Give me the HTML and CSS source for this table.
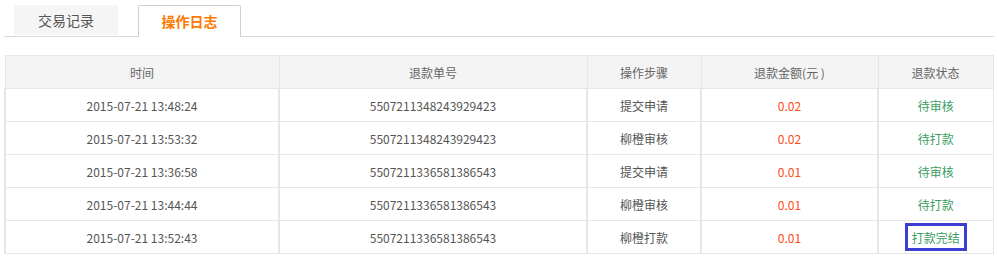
FILE: index.html
```html
<!DOCTYPE html>
<html lang="zh">
<head>
<meta charset="utf-8">
<link rel="stylesheet" href="styles.css">
</head>
<body>
<div class="page">
  <div class="tabs">
    <div class="tab">交易记录</div>
    <div class="tab active">操作日志</div>
  </div>
  <table class="log">
    <colgroup>
      <col style="width:274px"><col style="width:308px"><col style="width:114px"><col style="width:177px"><col style="width:115px">
    </colgroup>
    <thead>
      <tr><th>时间</th><th>退款单号</th><th>操作步骤</th><th>退款金额(元 )</th><th>退款状态</th></tr>
    </thead>
    <tbody>
      <tr><td>2015-07-21 13:48:24</td><td>5507211348243929423</td><td>提交申请</td><td class="amt">0.02</td><td class="st">待审核</td></tr>
      <tr><td>2015-07-21 13:53:32</td><td>5507211348243929423</td><td>柳橙审核</td><td class="amt">0.02</td><td class="st">待打款</td></tr>
      <tr><td>2015-07-21 13:36:58</td><td>5507211336581386543</td><td>提交申请</td><td class="amt">0.01</td><td class="st">待审核</td></tr>
      <tr><td>2015-07-21 13:44:44</td><td>5507211336581386543</td><td>柳橙审核</td><td class="amt">0.01</td><td class="st">待打款</td></tr>
      <tr><td>2015-07-21 13:52:43</td><td>5507211336581386543</td><td>柳橙打款</td><td class="amt">0.01</td><td class="st"><span class="mark">打款完结</span></td></tr>
    </tbody>
  </table>
</div>
</body>
</html>
```
FILE: styles.css
```css
html, body {
  margin: 0;
  padding: 0;
  background: #fff;
}
body {
  font-family: "Noto Sans CJK SC", "Liberation Sans", sans-serif;
  font-size: 12px;
  color: #555;
}
.page {
  padding: 0 3px 0 4px;
}
.tabs {
  display: flex;
  align-items: flex-start;
  padding: 5px 0 0 10px;
  height: 31px;
  border-bottom: 1px solid #d8d8d8;
}
.tab {
  width: 104px;
  height: 30px;
  line-height: 30px;
  text-align: center;
  font-size: 14px;
  color: #555;
  background: #f5f5f5;
  border-radius: 2px;
}
.tab.active {
  margin-left: 20px;
  width: 101px;
  height: 31px;
  line-height: 30px;
  background: #fff;
  border: 1px solid #cfcfcf;
  border-bottom: none;
  border-radius: 2px 2px 0 0;
  color: #ff7800;
  font-weight: bold;
  position: relative;
  z-index: 1;
}
.log {
  margin-top: 18px;
  width: 988px;
  border-collapse: collapse;
  table-layout: fixed;
}
.log th, .log td {
  height: 32px;
  padding: 0;
  text-align: center;
  font-weight: normal;
  border: 1px solid #e6e6e6;
  border-left-width: 2px;
}
.log th {
  height: 32px;
  background: #f4f4f4;
  color: #666;
  border-left-width: 1px;
}
.log td {
  color: #555;
}
.log td.amt {
  color: #ff4a1a;
}
.log td.st {
  color: #3a9e5e;
}
.mark {
  display: inline-block;
  padding: 3px 4px 2px;
  border: 3px solid #3b3fd1;
  line-height: 17px;
}
```
